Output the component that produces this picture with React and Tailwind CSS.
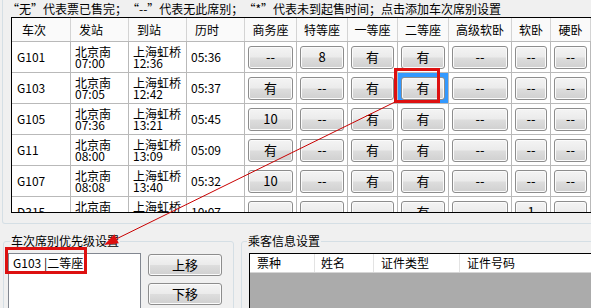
import React from 'react';

const COLS = [59, 58, 58, 58, 52, 51, 50, 51, 63, 39, 40];
const HEADS = ['车次', '发站', '到站', '历时', '商务座', '特等座', '一等座', '二等座', '高级软卧', '软卧', '硬卧'];

const TRAINS = [
  { no: 'G101', dep: '07:00', arr: '12:36', dur: '05:36', seats: ['--', '8', '有', '有', '--', '--', '--'] },
  { no: 'G103', dep: '07:05', arr: '12:42', dur: '05:37', seats: ['有', '--', '有', '有', '--', '--', '--'] },
  { no: 'G105', dep: '07:36', arr: '13:21', dur: '05:45', seats: ['10', '--', '有', '有', '--', '--', '--'] },
  { no: 'G11', dep: '08:00', arr: '13:09', dur: '05:09', seats: ['有', '--', '有', '有', '--', '--', '--'] },
  { no: 'G107', dep: '08:08', arr: '13:40', dur: '05:32', seats: ['10', '--', '有', '有', '--', '--', '--'] },
  { no: 'D315', dep: '08:15', arr: '18:22', dur: '10:07', seats: ['--', '--', '--', '有', '--', '1', '--'] },
];

// full-width curly quotes like the original dialog font
function Quoted({ children }) {
  return (
    <>
      <span className="inline-block w-[12px] text-right">“</span>
      {children}
      <span className="inline-block w-[12px] text-left">”</span>
    </>
  );
}

function WinButton({ children, className = '' }) {
  return (
    <div
      className={`flex items-center justify-center rounded-[3px] border border-[#8d8d8d] bg-[linear-gradient(#f4f4f4,#ebebeb_48%,#dddddd_52%,#d0d0d0)] shadow-[inset_0_0_0_1px_#fbfbfb] ${className}`}
    >
      {children}
    </div>
  );
}

function TrainRow({ t, rowIndex }) {
  return (
    <div className="flex h-[31px] border-b border-[#b9b9b9] bg-white">
      <div style={{ width: COLS[0] }} className="flex shrink-0 items-center border-r border-[#b9b9b9] pl-[5px]">
        {t.no}
      </div>
      <div style={{ width: COLS[1] }} className="flex shrink-0 flex-col justify-center border-r border-[#b9b9b9] pl-[4px] leading-[11px]">
        <span>北京南</span>
        <span>{t.dep}</span>
      </div>
      <div style={{ width: COLS[2] }} className="flex shrink-0 flex-col justify-center border-r border-[#b9b9b9] pl-[4px] leading-[11px]">
        <span>上海虹桥</span>
        <span>{t.arr}</span>
      </div>
      <div style={{ width: COLS[3] }} className="flex shrink-0 items-center border-r border-[#b9b9b9] pl-[4px]">
        {t.dur}
      </div>
      {t.seats.map((s, i) => (
        <div
          key={i}
          style={{ width: COLS[i + 4] }}
          className={`flex shrink-0 items-center border-r border-[#b9b9b9] px-[3px] ${rowIndex === 1 && i === 3 ? 'bg-[#3399ff]' : ''}`}
        >
          <WinButton className="h-[23px] w-full text-[13px]">{s}</WinButton>
        </div>
      ))}
    </div>
  );
}

export default function App() {
  return (
    <div className="relative h-[308px] w-[591px] overflow-hidden bg-[#f0f0f0] font-['Noto_Sans_CJK_SC',sans-serif] text-[12px] text-black">
      {/* upper group: train list */}
      <div className="ml-[2px] h-[224px] w-[640px] rounded-b-[3px] border-x border-b border-[#d5dfe5]">
        <div className="h-[17px] whitespace-nowrap pl-[4px] leading-[17px]">
          <Quoted>无</Quoted>代表票已售完；<Quoted>--</Quoted>代表无此席别；<Quoted>*</Quoted>代表未到起售时间；点击添加车次席别设置
        </div>
        <div className="ml-[8px] h-[196px] w-[640px] overflow-hidden border-y border-l border-black bg-white">
          <div className="flex h-[24px] border-b border-[#b9b9b9] bg-[#fafafa]">
            {HEADS.map((h, i) => (
              <div
                key={h}
                style={{ width: COLS[i] }}
                className={`flex shrink-0 items-center border-r border-[#d4d4d4] text-[12px] ${
                  i === 0 ? 'pl-[10px]' : i < 4 ? 'pl-[8px]' : 'justify-center'
                }`}
              >
                {h}
              </div>
            ))}
          </div>
          {TRAINS.map((t, i) => (
            <TrainRow key={t.no} t={t} rowIndex={i} />
          ))}
        </div>
      </div>

      {/* lower groups */}
      <div className="ml-[3px] mt-[17px] flex gap-[7px]">
        <div className="relative h-[90px] w-[231px] shrink-0 rounded-[3px] border border-[#d5dfe5]">
          <span className="absolute -top-[9px] left-[6px] bg-[#f0f0f0] px-[1px] leading-[16px]">车次席别优先级设置</span>
          <div className="flex gap-[7px] pl-[4px] pt-[11px]">
            <div className="h-[70px] w-[133px] border border-[#828790] bg-white pl-[4px] pt-[2px] leading-[14px]">
              G103 |二等座
            </div>
            <div className="flex flex-col gap-[7px] pt-[1px]">
              <WinButton className="h-[22px] w-[74px] text-[13px]">上移</WinButton>
              <WinButton className="h-[22px] w-[74px] text-[13px]">下移</WinButton>
            </div>
          </div>
        </div>

        <div className="relative h-[90px] w-[380px] shrink-0 rounded-[3px] border border-[#d5dfe5]">
          <span className="absolute -top-[9px] left-[5px] bg-[#f0f0f0] px-[1px] leading-[16px]">乘客信息设置</span>
          <div className="pl-[7px] pt-[11px]">
            <div className="h-[70px] border-l border-t border-black bg-[#ababab]">
              <div className="flex h-[19px] border-b border-[#d5d5d5] bg-white leading-[18px]">
                <div className="w-[65px] shrink-0 border-r border-[#e3e3e3] pl-[7px]">票种</div>
                <div className="w-[59px] shrink-0 border-r border-[#e3e3e3] pl-[6px]">姓名</div>
                <div className="w-[86px] shrink-0 border-r border-[#e3e3e3] pl-[7px]">证件类型</div>
                <div className="w-[120px] shrink-0 pl-[7px]">证件号码</div>
              </div>
            </div>
          </div>
        </div>
      </div>

      {/* annotation overlay */}
      <div className="pointer-events-none absolute left-[394px] top-[68px] h-[35px] w-[46px] border-[3px] border-[#dd1010]" />
      <div className="pointer-events-none absolute left-[5px] top-[247px] h-[27px] w-[82px] border-[3px] border-[#dd1010]" />
      <svg className="pointer-events-none absolute left-0 top-0" width="591" height="308">
        <line x1="395" y1="102" x2="116.6" y2="238.8" stroke="#c80000" strokeWidth="1" />
        <polygon points="104,245 118.8,243.3 114.4,234.3" fill="#dd1010" />
      </svg>
    </div>
  );
}
